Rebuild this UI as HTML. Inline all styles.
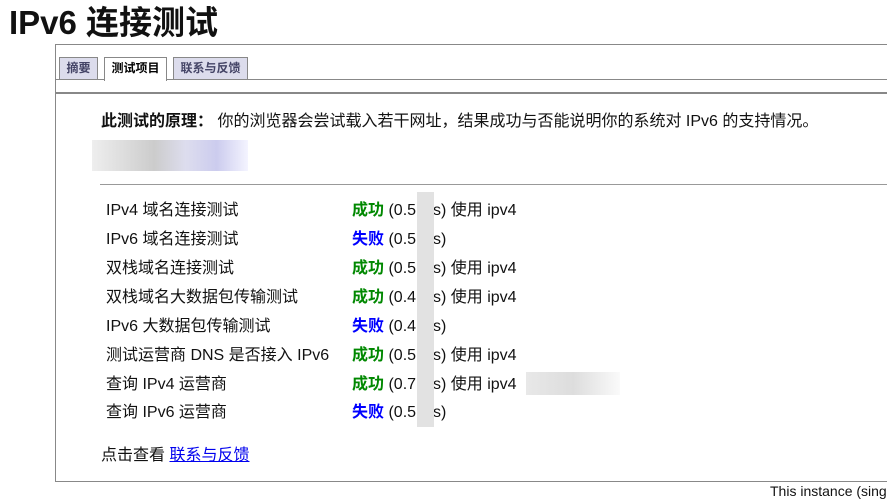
<!DOCTYPE html>
<html><head><meta charset="utf-8"><style>
body{margin:0;width:887px;height:492px;overflow:hidden;background:#fff;font-family:"Liberation Sans","Noto Sans CJK SC",sans-serif;color:#111;position:relative}
.a{position:absolute;white-space:nowrap}
h1{position:absolute;left:9px;top:3px;margin:0;font-size:33px;font-weight:bold;line-height:40px}
.tab{position:absolute;top:57px;height:21px;border:1px solid #888;border-bottom:none;background:#dcdcec;color:#446;font-size:12px;line-height:21px;text-align:center;font-weight:bold}
.row{position:absolute;left:106px;font-size:16px;line-height:20px;white-space:nowrap}
.s{position:absolute;left:352px;font-size:16px;line-height:20px;white-space:nowrap}
.t{position:absolute;left:433px;font-size:16px;line-height:20px;white-space:nowrap}
.ok{color:#080;font-weight:bold}.no{color:#00f;font-weight:bold}
</style></head><body>
<h1>IPv6 连接测试</h1>
<div class="a" style="left:55px;top:44px;width:832px;height:1px;background:#888"></div>
<div class="a" style="left:55px;top:44px;width:1px;height:438px;background:#888"></div>
<div class="a" style="left:55px;top:481px;width:832px;height:1px;background:#888"></div>
<div class="a" style="left:56px;top:79px;width:831px;height:1px;background:#888"></div>
<div class="a" style="left:56px;top:92px;width:831px;height:2px;background:#888"></div>
<div class="tab" style="left:59px;width:37px">摘要</div>
<div class="tab" style="left:104px;width:61px;height:23px;background:#fff;color:#000">测试项目</div>
<div class="tab" style="left:173px;width:73px">联系与反馈</div>
<div class="a" style="left:101px;top:112px;font-size:16px;line-height:20px"><b>此测试的原理：</b> 你的浏览器会尝试载入若干网址，结果成功与否能说明你的系统对 IPv6 的支持情况。</div>
<div class="a" style="left:92px;top:140px;width:156px;height:31px;background:linear-gradient(90deg,#eee,#ccc 40%,#dde 60%,#cce 80%,#f4f4ff)"></div>
<div class="a" style="left:100px;top:184px;width:787px;height:1px;background:#999"></div>
<div class="row" style="top:201px">IPv4 域名连接测试</div>
<div class="row" style="top:230px">IPv6 域名连接测试</div>
<div class="row" style="top:259px">双栈域名连接测试</div>
<div class="row" style="top:288px">双栈域名大数据包传输测试</div>
<div class="row" style="top:317px">IPv6 大数据包传输测试</div>
<div class="row" style="top:346px">测试运营商 DNS 是否接入 IPv6</div>
<div class="row" style="top:375px">查询 IPv4 运营商</div>
<div class="row" style="top:403px">查询 IPv6 运营商</div>
<div class="s" style="top:201px"><span class="ok">成功</span> (0.5</div>
<div class="s" style="top:230px"><span class="no">失败</span> (0.5</div>
<div class="s" style="top:259px"><span class="ok">成功</span> (0.5</div>
<div class="s" style="top:288px"><span class="ok">成功</span> (0.4</div>
<div class="s" style="top:317px"><span class="no">失败</span> (0.4</div>
<div class="s" style="top:346px"><span class="ok">成功</span> (0.5</div>
<div class="s" style="top:375px"><span class="ok">成功</span> (0.7</div>
<div class="s" style="top:403px"><span class="no">失败</span> (0.5</div>
<div class="t" style="top:201px">s) 使用 ipv4</div>
<div class="t" style="top:230px">s)</div>
<div class="t" style="top:259px">s) 使用 ipv4</div>
<div class="t" style="top:288px">s) 使用 ipv4</div>
<div class="t" style="top:317px">s)</div>
<div class="t" style="top:346px">s) 使用 ipv4</div>
<div class="t" style="top:375px">s) 使用 ipv4</div>
<div class="t" style="top:403px">s)</div>
<div class="a" style="left:417px;top:192px;width:17px;height:235px;background:#e2e2e2"></div>
<div class="a" style="left:526px;top:372px;width:94px;height:23px;background:linear-gradient(90deg,#e8e8e8,#ddd 50%,#fafafa)"></div>
<div class="a" style="left:101px;top:446px;font-size:16px;line-height:20px">点击查看 <span style="color:#00e;text-decoration:underline">联系与反馈</span></div>
<div class="a" style="left:770px;top:482px;font-size:14px;line-height:18px">This instance (sing</div>
</body></html>
